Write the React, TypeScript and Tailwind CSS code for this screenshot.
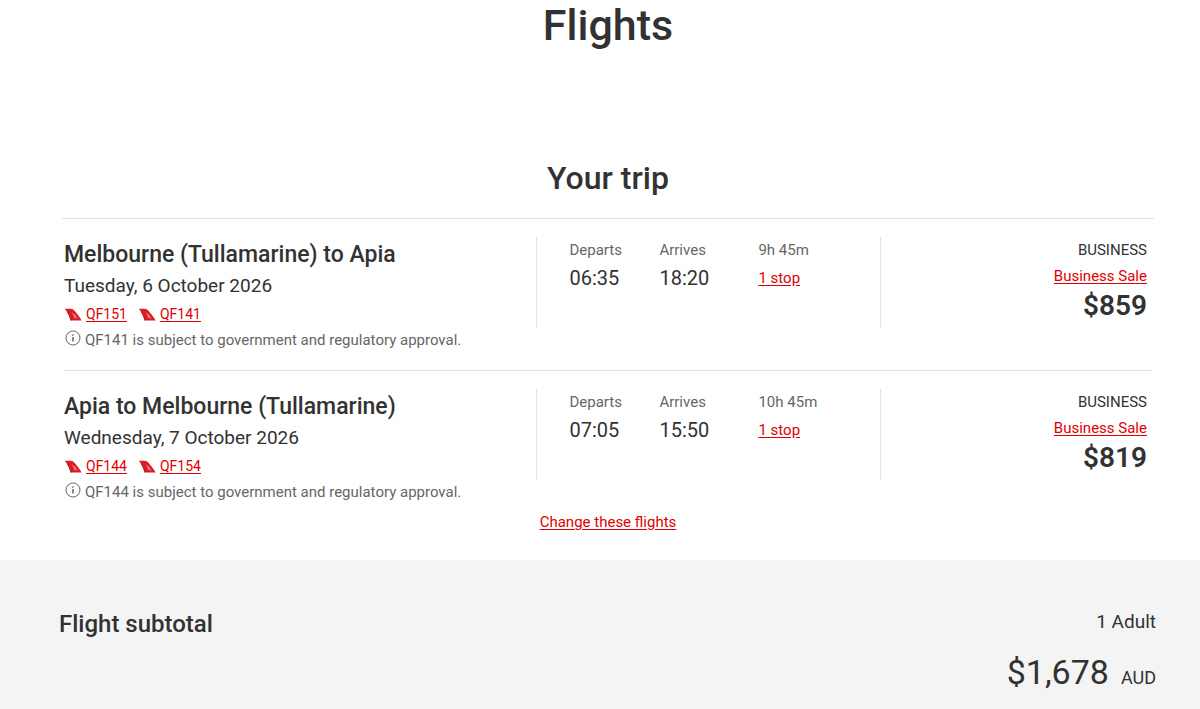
interface Flight {
  route: string;
  date: string;
  numbers: string[];
  notice: string;
  departs: string;
  arrives: string;
  duration: string;
  price: string;
}

const flights: Flight[] = [
  {
    route: "Melbourne (Tullamarine) to Apia",
    date: "Tuesday, 6 October 2026",
    numbers: ["QF151", "QF141"],
    notice: "QF141 is subject to government and regulatory approval.",
    departs: "06:35",
    arrives: "18:20",
    duration: "9h 45m",
    price: "$859",
  },
  {
    route: "Apia to Melbourne (Tullamarine)",
    date: "Wednesday, 7 October 2026",
    numbers: ["QF144", "QF154"],
    notice: "QF144 is subject to government and regulatory approval.",
    departs: "07:05",
    arrives: "15:50",
    duration: "10h 45m",
    price: "$819",
  },
];

function TailIcon() {
  return (
    <svg viewBox="0 0 17 13" className="w-[17px] h-[13px] mt-0.5" aria-hidden="true">
      <path d="M0.2 0.8H5.6C7.2 0.8 8.4 1.6 9.6 2.9C12.2 5.8 15 9.2 16.6 12.4H5.6C4.6 8.6 2.6 4.4 0.2 0.8Z" fill="#dc1c26" />
      <path d="M0.2 0.8C2.6 4.4 4.6 8.6 5.6 12.4H6.4C5.2 8 3 3.8 0.8 0.8Z" fill="#b01820" />
      <path d="M6 4.4C7.4 4.8 8.6 5.6 9.4 6.6L11 6.8L10.2 7.8C11.4 8.8 12.2 9.8 12.8 11C11.6 10 10.2 9.4 8.4 9.8C9 8.8 9 8.2 8.6 7.4C8 6.2 7 5.2 6 4.4Z" fill="#fff" opacity="0.5" />
    </svg>
  );
}

function InfoIcon() {
  return (
    <svg viewBox="0 0 16 16" className="w-4 h-4 -mt-1" fill="none" stroke="#666" aria-hidden="true">
      <circle cx="8" cy="8" r="7" />
      <path d="M8 7V11.6" strokeWidth="1.5" />
      <path d="M8 4.2V5.8" strokeWidth="1.5" />
    </svg>
  );
}

function FlightRow({ flight }: { flight: Flight }) {
  return (
    <li className="grid grid-cols-[472fr_344fr_271fr] border-t border-[#e1e1e1] first:border-t-0 pt-[18px] pb-[18px] last:pb-1.5">
      <div>
        <h3 className="text-[23px] leading-9 font-medium">{flight.route}</h3>
        <p className="text-[19px] leading-[26px]">{flight.date}</p>
        <div className="flex items-center gap-3 h-[29px] pl-px">
          {flight.numbers.map((number) => (
            <span key={number} className="flex items-center gap-1">
              <TailIcon />
              <a href="#flight" className="text-sm leading-6 text-[#e00000] underline underline-offset-2">
                {number}
              </a>
            </span>
          ))}
        </div>
        <p className="flex items-center gap-1 pl-px text-[15px] leading-6 text-[#666]">
          <InfoIcon />
          <span>{flight.notice}</span>
        </p>
      </div>

      <div className="flex h-[91px] border-x border-dotted border-[#ccc] pl-8">
        <dl className="w-[90px]">
          <dt className="text-[15px] leading-[27px] text-[#666]">Departs</dt>
          <dd className="text-xl leading-7">{flight.departs}</dd>
        </dl>
        <dl className="w-[99px]">
          <dt className="text-[15px] leading-[27px] text-[#666]">Arrives</dt>
          <dd className="text-xl leading-7">{flight.arrives}</dd>
        </dl>
        <div className="text-[15px]">
          <p className="leading-[27px] text-[#666]">{flight.duration}</p>
          <a href="#stops" className="leading-7 text-[#e00000] underline underline-offset-2">1 stop</a>
        </div>
      </div>

      <div className="flex flex-col items-end pr-[5px] text-[15px]">
        <p className="leading-[27px]">BUSINESS</p>
        <a href="#fare" className="leading-6 text-[#e00000] underline underline-offset-2">Business Sale</a>
        <p className="text-[28px] leading-9 font-semibold">{flight.price}</p>
      </div>
    </li>
  );
}

export default function App() {
  return (
    <div className="min-h-screen flex flex-col bg-white font-['Roboto','Liberation_Sans',sans-serif] text-[#323232]">
      <main className="pl-[62px] pr-[46px] text-center">
        <h1 className="text-[43px] leading-[50px] font-medium">Flights</h1>
        <h2 className="pt-[108px] pb-5 text-[32px] leading-10 font-medium">Your trip</h2>
        <ul className="border-t border-[#e1e1e1] px-[2px] text-left">
          {flights.map((flight) => (
            <FlightRow key={flight.route} flight={flight} />
          ))}
        </ul>
        <div className="pb-[26px] leading-6">
          <a href="#change" className="text-[15px] text-[#e00000] underline underline-offset-2">
            Change these flights
          </a>
        </div>
      </main>

      <section className="grow flex justify-between bg-[#f4f4f4] pt-12 pb-3 pl-[59px] pr-11">
        <h2 className="text-2xl leading-8 font-medium">Flight subtotal</h2>
        <div className="text-right">
          <p className="text-[19px] leading-7">1 Adult</p>
          <p className="flex items-baseline justify-end gap-3 pt-3 text-[34px] leading-[48px]">
            $1,678 <span className="text-lg">AUD</span>
          </p>
        </div>
      </section>
    </div>
  );
}
